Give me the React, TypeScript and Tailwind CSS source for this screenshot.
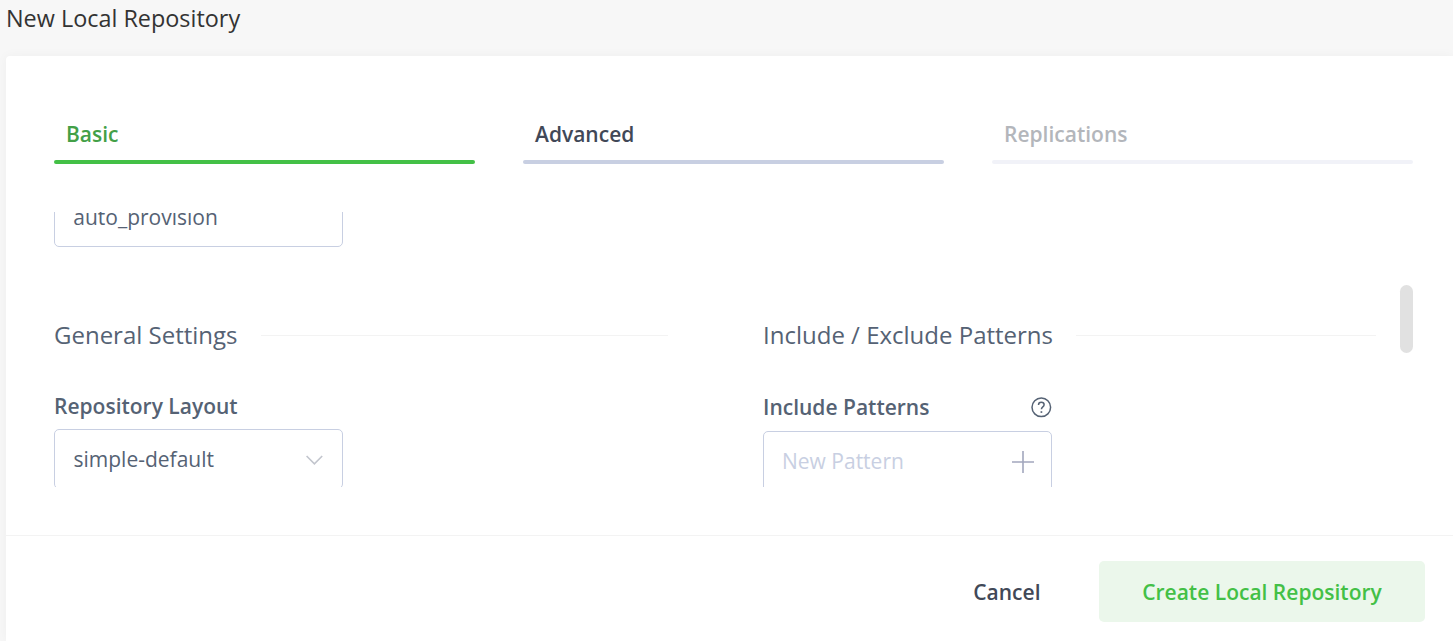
import React from 'react';

function Tab({ label, text, bar }: { label: string; text: string; bar: string }) {
  return (
    <button className="h-[50px] w-[421px] text-left">
      <span className={`block h-[46px] pl-3 pt-[5px] text-[21px] font-semibold leading-[30px] ${text}`}>{label}</span>
      <span className={`block h-1 rounded-[2px] ${bar}`} />
    </button>
  );
}

function SectionTitle({ children }: { children: string }) {
  return (
    <h2 className="flex h-9 items-center gap-[23px] whitespace-nowrap text-[24px] leading-9 text-[#556274]">
      {children}
      <span className="h-px flex-1 bg-[#f3f3f3]" />
    </h2>
  );
}

export default function App() {
  return (
    <div className="flex h-[641px] w-[1453px] flex-col overflow-hidden bg-[#f7f7f7] font-['Open_Sans',sans-serif]">
      <h1 className="h-14 shrink-0 pl-[6px] pt-[2px] text-[23.4px] leading-[33px] text-[#333]">New Local Repository</h1>
      <main className="ml-[6px] flex flex-1 flex-col rounded-tl-[4px] bg-white shadow-[0_0_12px_rgba(0,0,0,0.04)]">
        <nav className="flex gap-12 pl-12 pt-[58px]">
          <Tab label="Basic" text="text-[#43a047]" bar="bg-[#43c046]" />
          <Tab label="Advanced" text="text-[#414857]" bar="bg-[#c8cfe2]" />
          <Tab label="Replications" text="text-[#b3b6bb]" bar="bg-[#f1f2f8]" />
        </nav>

        <div className="ml-12 mt-12 flex h-[275px] w-[1359px] justify-between overflow-hidden">
          <div className="flex w-[1322px] gap-[95px]">
            <section className="flex w-[614px] flex-col">
              <div className="-mt-[23px] h-[58px] w-[289px] shrink-0 rounded-[5px] border border-[#c8cfe2] pl-[18.3px] text-[21px] leading-[54px] text-[#556274]">
                auto_provision
              </div>
              <div className="mt-[70px]">
                <SectionTitle>General Settings</SectionTitle>
              </div>
              <label className="mt-[38px] h-[30px] text-[21px] font-semibold leading-[30px] text-[#556274]">Repository Layout</label>
              <div className="mt-[8px] flex h-[60px] w-[289px] shrink-0 items-center justify-between rounded-[5px] border border-[#c8cfe2] pl-[18.5px] pr-[19px] text-[21px] text-[#556274]">
                <span className="pt-[2px]">simple-default</span>
                <svg className="mt-[2px] h-[10px] w-[18px]" viewBox="0 0 18 10" fill="none" stroke="#c2c5cd" strokeWidth="1.6">
                  <path d="M1.6 1l7.8 7.8L17.2 1" />
                </svg>
              </div>
            </section>

            <section className="flex w-[613px] flex-col pt-[105px]">
              <SectionTitle>Include / Exclude Patterns</SectionTitle>
              <div className="mt-[39px] flex h-[30px] w-[289px] items-center justify-between text-[21px] font-semibold leading-[30px] text-[#556274]">
                Include Patterns
                <svg className="h-[22px] w-[22px]" viewBox="0 0 22 22" fill="none" stroke="#556274" strokeWidth="1.5">
                  <circle cx="11.3" cy="11.3" r="9.3" />
                  <path d="M8.5 9c0-1.7 1.1-2.7 2.8-2.7s2.8 1 2.8 2.5c0 2.1-2.7 2.2-2.7 4.4" />
                  <path d="M11.4 15.2v1.7" strokeWidth="1.7" />
                </svg>
              </div>
              <div className="mt-[9px] flex h-[66px] w-[289px] shrink-0 items-start justify-between rounded-[5px] border border-[#c8cfe2] pl-[18px] pr-[17px] pt-[14px] text-[21px] leading-[30px] text-[#c8cfe2]">
                <span>New Pattern</span>
                <svg className="mt-[5px] h-[22px] w-[22px]" viewBox="0 0 22 22" fill="none" stroke="#a2a7bd" strokeWidth="1.6">
                  <path d="M0 11h22M11 0v22" />
                </svg>
              </div>
            </section>
          </div>
          <div className="mt-[73px] h-[68px] w-[13px] rounded-full bg-[#e1e1e1]" />
        </div>

        <footer className="mt-12 flex h-[106px] items-start justify-end border-t border-[#f3f3f3] pr-7 pt-[25px] text-[21px] font-semibold">
          <button className="mr-[58.5px] h-[61px] pt-[2px] text-[#414857]">Cancel</button>
          <button className="h-[61px] w-[326px] rounded-[5px] bg-[#ebf7eb] pt-[2px] text-[#43c046]">Create Local Repository</button>
        </footer>
      </main>
    </div>
  );
}
